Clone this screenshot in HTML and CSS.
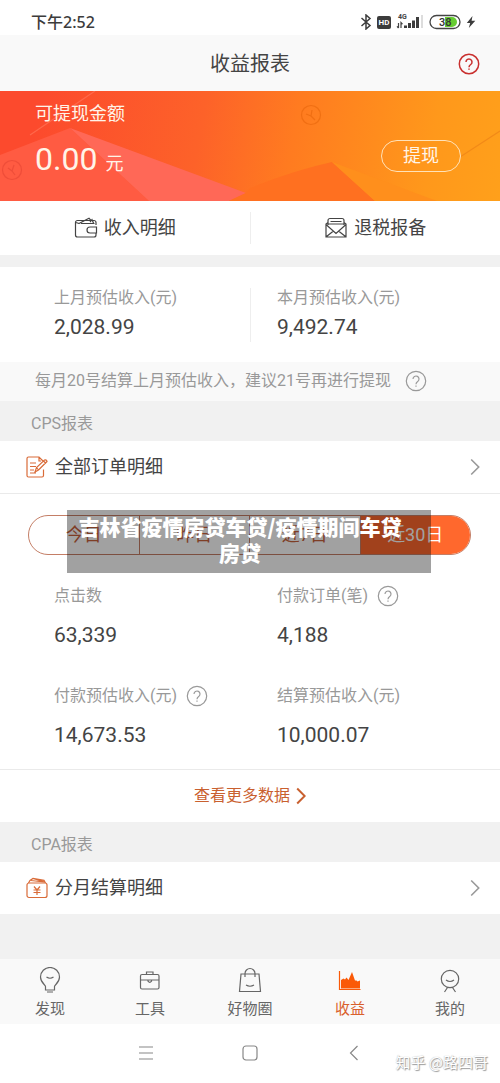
FILE: index.html
```html
<!DOCTYPE html>
<html lang="zh-CN">
<head>
<meta charset="utf-8">
<meta name="viewport" content="width=device-width, initial-scale=1">
<title>收益报表</title>
<link rel="stylesheet" href="styles.css">
</head>
<body>
<svg class="defs" aria-hidden="true">
  <symbol id="help" viewBox="0 0 22 22"><circle cx="11" cy="11" r="9.7"/><path d="M8 9a3 3 0 1 1 4.700 2.500c-1.100.8-1.700 1.300-1.700 2.700M11 15.500v1.300"/></symbol>
  <symbol id="chevron" viewBox="0 0 10 18"><path d="M1.200 1.500 8.700 9l-7.500 7.500"/></symbol>
</svg>

<div class="status">
  <span>下午2:52</span>
  <div class="status-icons">
    <svg width="12" height="16" viewBox="0 0 12 16"><path d="M1.500 4 10 11.500 6 15V1l4 3.500L1.500 12" fill="none" stroke="#3c3c3c" stroke-width="1.500"/></svg>
    <span class="hd">HD</span>
    <svg class="signal" width="28" height="18" viewBox="0 0 28 18"><text x="2" y="6" class="net">4G</text><path d="M2.500 10v5M1 13.300 2.500 15M5 15v-5.500l1.500 1.700" fill="none" stroke="#444"/><path d="M8 15h3v-2.500H8zM12 15h3V10h-3zM16 15h3V7.500h-3zM20 15h3V4h-3z" fill="#3c3c3c"/><path d="M25 15h2V2h-2z" fill="#ddd"/></svg>
    <svg width="32" height="16" viewBox="0 0 32 16"><path d="M16 3h7a5 5 0 0 1 0 10h-7z" fill="#67cc32"/><rect x="1" y="1.500" width="30" height="13" rx="6.500" fill="none" stroke="#444" stroke-width="1.300"/><text x="10" y="12" class="charge">38</text></svg>
    <svg width="10" height="14" viewBox="0 0 10 14"><path d="M6.500 1 .8 8h3.400L2.800 13 9.300 5.800H5.600z" fill="#3c3c3c"/></svg>
  </div>
</div>

<header class="header">
  <h1>收益报表</h1>
  <button class="help-button" aria-label="帮助"><svg class="icon"><use href="#help"/></svg></button>
</header>

<main>
  <section class="banner">
    <svg class="banner-art" viewBox="0 0 500 110" preserveAspectRatio="none" aria-hidden="true">
      <path d="M70 37 0 64v46h149z" fill="#ff5b42"/>
      <path d="M70 37 246 102l-17 8h-80z" fill="#ff6857"/>
      <path d="M250 97q45-18 82-26l43 39H229l17-8z" fill="#ff7020"/>
      <path d="m332 71 105 39h-62z" fill="#ff8f1c"/>
      <path d="M95 0 30 44" stroke="#ff684b" fill="none"/>
      <path d="m500 40-40 26" stroke="#f28a18" fill="none"/>
      <g class="coin" fill="none" stroke="#d93a2c"><circle cx="12" cy="79" r="9.500"/><path d="m8 77 4 3 2-6M12 80l3 4"/></g>
      <g class="coin" fill="none" stroke="#dc5a00"><circle cx="311" cy="24" r="9.500"/><path d="m306 23 5 2 1-6M311 25l4 4"/></g>
    </svg>
    <div class="balance">
      <div class="balance-label">可提现金额</div>
      <div class="balance-value">0.00 <span>元</span></div>
    </div>
    <button class="withdraw">提现</button>
  </section>

  <nav class="actions">
    <a href="#income">
      <svg width="24" height="22" viewBox="0 0 24 22"><path d="M22 8V5.500a2 2 0 0 0-2-2H3.500a2 2 0 0 0-2 2V18a2 2 0 0 0 2 2H20a2 2 0 0 0 2-2v-2M22.500 10H16a3 3 0 0 0 0 6h6.500zM5 6.500 15 1.200l2 2.300M7 6.500h13.500M16 5l2-2.300 1.600 3.500M2 5.500l3 1"/></svg>
      收入明细</a>
    <a href="#tax">
      <svg width="24" height="22" viewBox="0 0 24 22"><path d="M4 5.500 2 7v13h20V7l-2-1.500M4 8V3.500a2 2 0 0 1 2-2h12a2 2 0 0 1 2 2V8M6.500 4.500h11M4 7h16M2 7.500l10 9 10-9M2.500 19.500l7-5.500M21.500 19.500l-7-5.500"/></svg>
      退税报备</a>
  </nav>

  <section class="pairs estimate">
    <div><div class="label">上月预估收入(元)</div><div class="number">2,028.99</div></div>
    <div><div class="label">本月预估收入(元)</div><div class="number">9,492.74</div></div>
  </section>
  <p class="notice">每月20号结算上月预估收入，建议21号再进行提现 <svg class="icon"><use href="#help"/></svg></p>

  <h2 class="section-title">CPS报表</h2>
  <a class="row" href="#orders">
    <svg width="22" height="22" viewBox="0 0 22 22"><path d="M17.500 13.500v6a1.500 1.500 0 0 1-1.500 1.500H2.500A1.500 1.500 0 0 1 1 19.500v-17A1.500 1.500 0 0 1 2.500 1H13l4 4M13 1v4h2M4 7h6M4 10.500h6M4 14h4M4 17h6M9 16l1.500-4.500 8-7.500q2-.5 2.500 1.500l-8.500 8.500zM10.500 11.500l2 2.500M17.500 5l2.500 2.500"/></svg>
    <span>全部订单明细</span><svg class="chevron"><use href="#chevron"/></svg>
  </a>

  <section class="report">
    <div class="segment-wrap">
      <div class="segment">
        <button>今日</button><button>昨日</button><button>近7日</button><button class="selected">近30日</button>
      </div>
      <div class="caption">吉林省疫情房贷车贷/疫情期间车贷房贷</div>
    </div>
    <div class="pairs stats">
      <div><div class="label">点击数</div><div class="number">63,339</div></div>
      <div><div class="label">付款订单(笔) <svg class="icon"><use href="#help"/></svg></div><div class="number">4,188</div></div>
      <div><div class="label">付款预估收入(元) <svg class="icon"><use href="#help"/></svg></div><div class="number">14,673.53</div></div>
      <div><div class="label">结算预估收入(元)</div><div class="number">10,000.07</div></div>
    </div>
  </section>
  <a class="more" href="#more">查看更多数据 <svg class="chevron"><use href="#chevron"/></svg></a>

  <h2 class="section-title">CPA报表</h2>
  <a class="row last" href="#monthly">
    <svg width="22" height="22" viewBox="0 0 22 22"><rect x="1" y="6" width="20" height="14.500" rx="2"/><path d="M2.500 6 4 3.500l3-2 11 1.800L19.500 6M5 3.500 18 5M7 1.500 18.500 5M8 9.500l3 3.500 3-3.500M7.500 13h7M7.500 15.500h7M11 13v5"/></svg>
    <span>分月结算明细</span><svg class="chevron"><use href="#chevron"/></svg>
  </a>
</main>

<nav class="tabs">
  <a href="#discover"><svg viewBox="0 0 28 28"><path d="M9.500 23v-3.500c0-1.500-5-4-5-9.500a9.500 9.500 0 0 1 19 0c0 5.500-5 8-5 9.500V23zM11 25h6M10.500 10q3.500 2.500 7 0"/></svg>发现</a>
  <a href="#tools"><svg viewBox="0 0 28 28"><rect x="4.500" y="7.500" width="18.500" height="14.500" rx="1.500"/><path d="M10.500 7.500V5h6.500v2.500M4.500 13H23M12 13v1.200q1.800 2.300 3.500 0V13"/></svg>工具</a>
  <a href="#goods"><svg viewBox="0 0 28 28"><path d="M5 7h18l1.500 17.500h-21zM9 10V6.500a5 5 0 0 1 10 0V10M10 18q4 2.500 8 0"/></svg>好物圈</a>
  <a class="current" href="#earnings"><svg viewBox="0 0 28 28"><path d="M3.500 4v18.500h21"/><path class="fill" d="M5 21.500V13l2.500-1.500 1.500 1 1.500-2 2 2.500L16 5l3 8.500h1.500l1 1 2.500-1v8z"/></svg>收益</a>
  <a href="#mine"><svg viewBox="0 0 28 28"><circle cx="14" cy="12" r="8.700"/><path d="M10 13q4 3 8 0M11.500 20.500 8.500 25M16.500 20.500l3 4.500"/></svg>我的</a>
</nav>

<footer class="system">
  <button aria-label="菜单"><svg viewBox="0 0 18 18"><path d="M2 3h14M2 9h14M2 15h14"/></svg></button>
  <button aria-label="主页"><svg viewBox="0 0 18 18"><rect x="2" y="2" width="14" height="14" rx="3"/></svg></button>
  <button aria-label="返回"><svg viewBox="0 0 18 18"><path d="M12.500 2 5.500 9l7 7"/></svg></button>
  <div class="watermark">知乎 @路四哥</div>
</footer>
</body>
</html>
```
FILE: styles.css
```css
* { box-sizing: border-box; }
body {
  margin: 0;
  background: #fff;
  color: #444;
  font: 16px/24px Roboto, "Noto Sans CJK SC", sans-serif;
}
h1, h2, p { margin: 0; font-weight: 400; }
a { color: inherit; text-decoration: none; }
button { font: inherit; color: inherit; background: none; border: 0; padding: 0; }
svg { flex: none; fill: none; stroke: currentColor; stroke-width: 1.2; }
.defs { display: none; }
.icon { width: 22px; height: 22px; }
.chevron { width: 10px; height: 18px; stroke-width: 1.6; }

.status {
  display: flex;
  justify-content: space-between;
  align-items: center;
  padding: 10px 24px 1px 31px;
  color: #3c3c3c;
  font-family: "Noto Sans", "Noto Sans CJK SC", sans-serif;
  font-weight: 500;
}
.status-icons { display: flex; align-items: center; gap: 5px; }
.status-icons svg { stroke: none; }
.hd {
  width: 14px;
  border-radius: 2px;
  background: #3c3c3c;
  color: #fff;
  font: 700 8px/13px Roboto, sans-serif;
  text-align: center;
}
.net { font: 700 7px Roboto, sans-serif; fill: #444; }
.charge { font: 500 11px Roboto, sans-serif; fill: #333; }

.header {
  display: grid;
  grid-template-columns: 1fr auto 1fr;
  align-items: center;
  padding: 15px 20px 13px;
  background: #f9f9f9;
}
.header h1 { grid-column: 2; font-size: 20px; line-height: 28px; }
.help-button { display: flex; justify-self: end; color: #c9302f; }
.help-button .icon { stroke-width: 1.5; }

.banner {
  position: relative;
  display: flex;
  justify-content: space-between;
  align-items: center;
  padding: 9px 39px 22px 35px;
  background: linear-gradient(100deg, #fc4a2d 8%, #fd6229 40%, #ff7b20 58%, #ff981b 85%, #ffa01b);
  color: #fff4e8;
}
.banner-art { position: absolute; inset: 0; width: 100%; height: 100%; stroke: none; }
.coin { opacity: .4; }
.balance, .withdraw { position: relative; }
.balance-label { font-size: 18px; line-height: 28px; }
.balance-value {
  display: flex;
  align-items: baseline;
  gap: 8px;
  padding-top: 11px;
  font-size: 32px;
  line-height: 40px;
}
.balance-value span { font-size: 18px; line-height: 24px; }
.withdraw {
  margin-top: 32px;
  padding: 0 21px;
  border: 1px solid #ffe2b8;
  border-radius: 16px;
  font-size: 18px;
  line-height: 30px;
}

.actions { display: flex; padding: 11px 0; border-bottom: 12px solid #f1f1f1; box-sizing: content-box; }
.actions a {
  flex: 1;
  display: flex;
  justify-content: center;
  align-items: center;
  gap: 6px;
  font-size: 18px;
  line-height: 32px;
}
.actions a + a { border-left: 1px solid #eee; }

.pairs { display: grid; grid-template-columns: 1fr 1fr; padding-left: 54px; }
.label { display: flex; align-items: center; gap: 9px; color: #999; }
.number { font-size: 21px; line-height: 30px; }
.estimate {
  padding-top: 19px;
  padding-bottom: 20px;
  background: linear-gradient(#eee, #eee) 50% 50% / 1px 54px no-repeat;
}
.estimate .number { padding-top: 2px; }
.notice {
  display: flex;
  align-items: center;
  gap: 14px;
  padding: 7px 35px 8px;
  background: #f9f9f9;
  color: #999;
}
.section-title { padding: 11px 31px 5px; background: #f1f1f1; color: #999; font-size: 16px; line-height: 24px; }
.row {
  display: flex;
  align-items: center;
  gap: 7px;
  padding: 11px 20px 11px 26px;
  border-bottom: 1px solid #eaeaea;
  color: #d96b38;
  font-size: 18px;
  line-height: 30px;
}
.row span { flex: 1; color: #444; }
.row .chevron { color: #999; }
.row.last { border-bottom: 45px solid #f1f1f1; box-sizing: content-box; }

.report { padding: 21px 0 19px; }
.segment-wrap { position: relative; padding: 0 29px 0 28px; }
.segment {
  display: flex;
  overflow: hidden;
  border: 1px solid #c47e66;
  border-radius: 20px;
  color: #c8623b;
  font-size: 18px;
  line-height: 38px;
}
.segment button { flex: 1; }
.segment button + button { border-left: 1px solid #c47e66; }
.segment .selected { background: #ff682d; color: #fff; }
.caption {
  position: absolute;
  top: -5px;
  left: 67px;
  right: 69px;
  padding: 3px 24px 8px 6px;
  background: rgba(0, 0, 0, .37);
  color: #fff;
  font: 900 21px/26px "Noto Sans CJK SC", sans-serif;
  text-align: center;
}
.stats { padding-top: 29px; row-gap: 34px; }
.stats .number { padding-top: 12px; }
.more {
  display: flex;
  justify-content: center;
  align-items: center;
  gap: 6px;
  padding: 14px 0;
  border-top: 1px solid #eaeaea;
  color: #c9602f;
}
.more .chevron { stroke-width: 2; }

.tabs { display: flex; padding: 8px 0 4px; background: #f9f9f9; color: #666; }
.tabs a {
  flex: 1;
  display: flex;
  flex-direction: column;
  align-items: center;
  gap: 3px;
  font-size: 15px;
  line-height: 22px;
}
.tabs svg { width: 28px; height: 28px; }
.tabs .current { color: #d9602c; }
.tabs .current svg { color: #fa5a08; }
.tabs .fill { fill: #fa5a08; stroke: none; }

.system {
  position: relative;
  display: flex;
  justify-content: center;
  gap: 86px;
  padding: 20px 0 21px;
  color: #888;
}
.system button { display: flex; }
.system svg { width: 18px; height: 18px; }
.watermark {
  position: absolute;
  right: 12px;
  bottom: 9px;
  color: #fff;
  font: 15px/24px "Noto Sans CJK SC", sans-serif;
  text-shadow: 1px 1px 1px #999, 0 0 1px #aaa;
}
```
